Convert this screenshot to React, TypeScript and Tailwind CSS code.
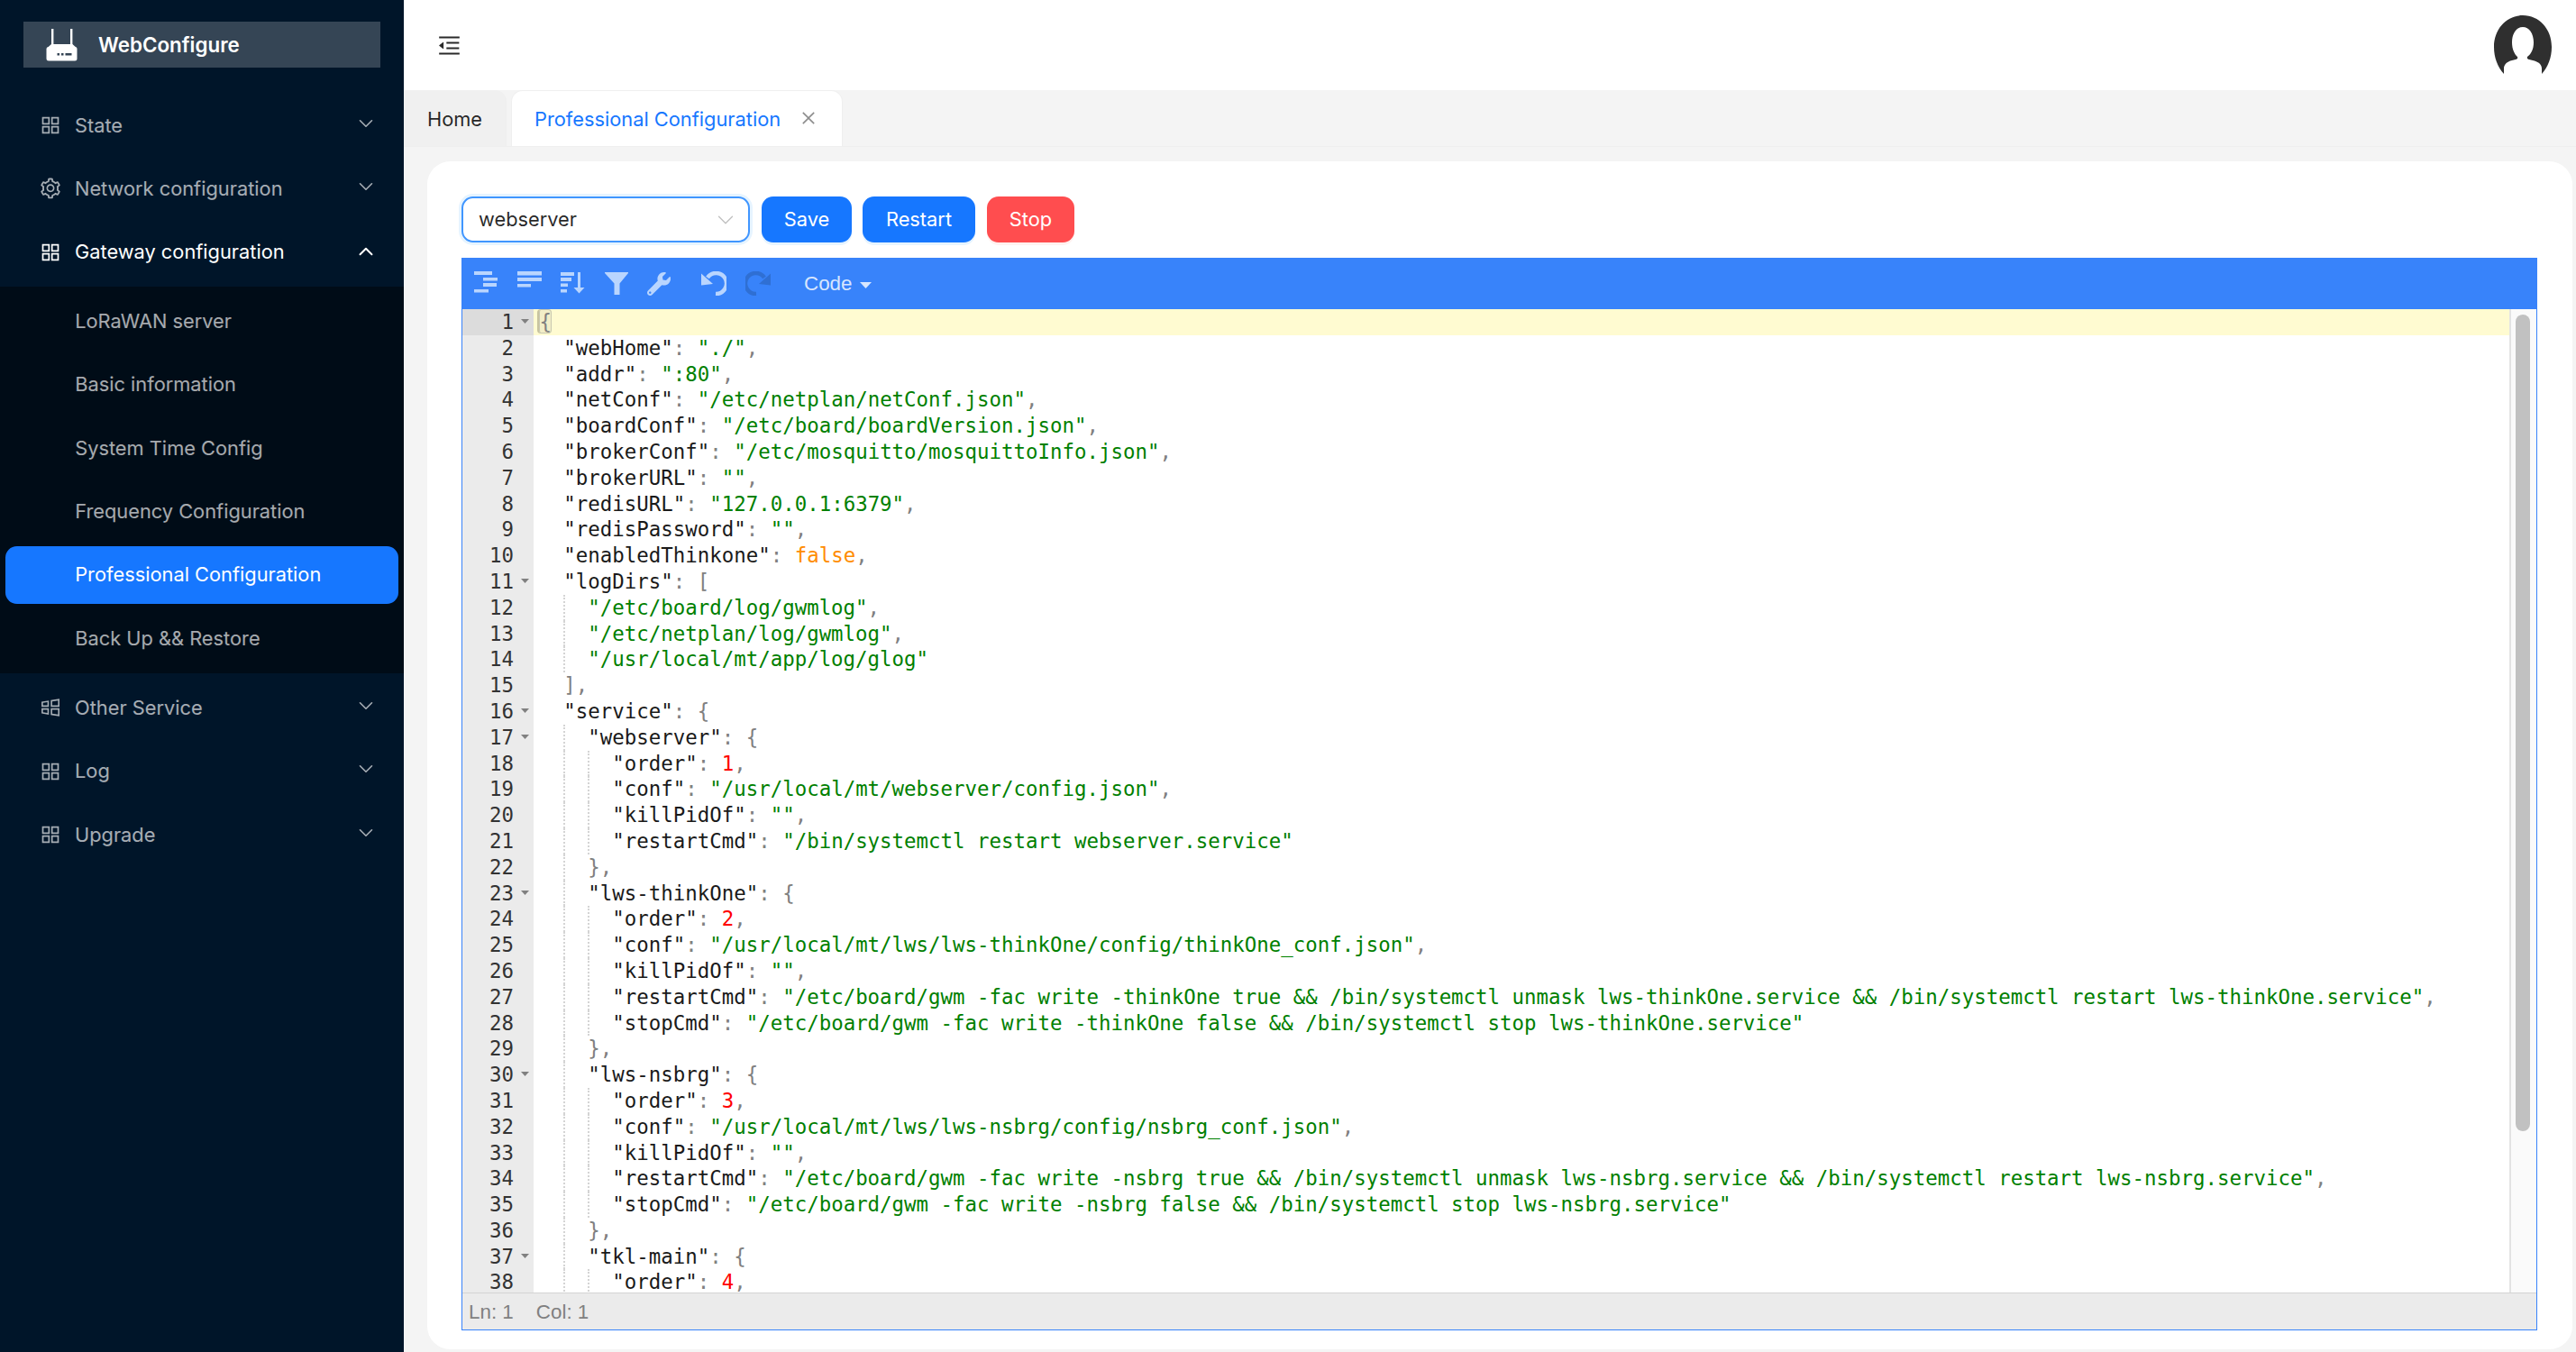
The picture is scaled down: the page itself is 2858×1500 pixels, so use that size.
import React from 'react';
import {
  AiOutlineAppstore,
  AiOutlineClose,
  AiOutlineMenuFold,
  AiOutlineSetting,
  AiOutlineWindows,
} from 'react-icons/ai';
import { FaWrench } from 'react-icons/fa';
import { ChevronDown, ChevronUp } from 'lucide-react';

const codeLines = [
  '{',
  '  "webHome": "./",',
  '  "addr": ":80",',
  '  "netConf": "/etc/netplan/netConf.json",',
  '  "boardConf": "/etc/board/boardVersion.json",',
  '  "brokerConf": "/etc/mosquitto/mosquittoInfo.json",',
  '  "brokerURL": "",',
  '  "redisURL": "127.0.0.1:6379",',
  '  "redisPassword": "",',
  '  "enabledThinkone": false,',
  '  "logDirs": [',
  '    "/etc/board/log/gwmlog",',
  '    "/etc/netplan/log/gwmlog",',
  '    "/usr/local/mt/app/log/glog"',
  '  ],',
  '  "service": {',
  '    "webserver": {',
  '      "order": 1,',
  '      "conf": "/usr/local/mt/webserver/config.json",',
  '      "killPidOf": "",',
  '      "restartCmd": "/bin/systemctl restart webserver.service"',
  '    },',
  '    "lws-thinkOne": {',
  '      "order": 2,',
  '      "conf": "/usr/local/mt/lws/lws-thinkOne/config/thinkOne_conf.json",',
  '      "killPidOf": "",',
  '      "restartCmd": "/etc/board/gwm -fac write -thinkOne true && /bin/systemctl unmask lws-thinkOne.service && /bin/systemctl restart lws-thinkOne.service",',
  '      "stopCmd": "/etc/board/gwm -fac write -thinkOne false && /bin/systemctl stop lws-thinkOne.service"',
  '    },',
  '    "lws-nsbrg": {',
  '      "order": 3,',
  '      "conf": "/usr/local/mt/lws/lws-nsbrg/config/nsbrg_conf.json",',
  '      "killPidOf": "",',
  '      "restartCmd": "/etc/board/gwm -fac write -nsbrg true && /bin/systemctl unmask lws-nsbrg.service && /bin/systemctl restart lws-nsbrg.service",',
  '      "stopCmd": "/etc/board/gwm -fac write -nsbrg false && /bin/systemctl stop lws-nsbrg.service"',
  '    },',
  '    "tkl-main": {',
  '      "order": 4,',
];

const foldLines = [1, 11, 16, 17, 23, 30, 37];

const tokenRe = /("(?:[^"\\]|\\.)*")(\s*:)?|(\b\d+\b)|(true|false)|([{}[\],])/g;

const highlight = (text: string) => {
  const out: React.ReactNode[] = [];
  let last = 0;
  let m: RegExpExecArray | null;
  tokenRe.lastIndex = 0;
  while ((m = tokenRe.exec(text))) {
    if (m.index > last) out.push(text.slice(last, m.index));
    if (m[1] && m[2]) {
      out.push(
        <span key={m.index}>
          <span className="text-[#1a1a1a]">{m[1]}</span>
          <span className="text-[#808080]">{m[2]}</span>
        </span>,
      );
    } else if (m[1]) {
      out.push(<span key={m.index} className="text-[#008000]">{m[1]}</span>);
    } else if (m[3]) {
      out.push(<span key={m.index} className="text-[#ff0000]">{m[3]}</span>);
    } else if (m[4]) {
      out.push(<span key={m.index} className="text-[#ff8c00]">{m[4]}</span>);
    } else {
      out.push(<span key={m.index} className="text-[#808080]">{m[5]}</span>);
    }
    last = m.index + m[0].length;
  }
  if (last < text.length) out.push(text.slice(last));
  return out;
};

const CodeLine = ({ text, active }: { text: string; active: boolean }) => {
  const indent = text.length - text.trimStart().length;
  const guides = Math.max(0, indent / 2 - 1);
  const body = text.trimStart();
  return (
    <div className={`flex h-[28.8px] pl-[6px] whitespace-pre ${active ? 'bg-[#fffbd1]' : ''}`}>
      {indent > 0 && <span className="w-[2ch] shrink-0" />}
      {Array.from({ length: guides }).map((_, i) => (
        <span key={i} className="w-[2ch] shrink-0 border-l-2 border-dotted border-[#d4d4d4]" />
      ))}
      {active ? (
        <span className="-ml-[2px] h-[27px] rounded-sm border-l-2 border-[#c8c4a0] bg-[#f2eec8] text-[#808080] shadow-[inset_0_0_0_1px_#c8c8b0]">{body}</span>
      ) : (
        <span>{highlight(body)}</span>
      )}
    </div>
  );
};

const RouterLogo = () => (
  <svg width="36" height="36" viewBox="0 0 36 36" className="shrink-0 text-white" fill="currentColor">
    <rect x="6" y="0" width="2.4" height="19" />
    <rect x="27" y="0" width="2.4" height="19" />
    <path d="M6 17h23.4l5 4.5H1z" />
    <rect x="0.5" y="20" width="34" height="15.5" rx="2.5" />
    <rect x="12.5" y="27" width="2.5" height="2.5" fill="#354555" />
    <rect x="17" y="27" width="2.5" height="2.5" fill="#354555" />
    <rect x="21.5" y="27" width="7" height="2.5" fill="#354555" />
  </svg>
);

const Avatar = () => (
  <svg width="64" height="66" viewBox="0 0 64 66">
    <path
      d="M11 65C4 57 0 47 0 35 0 15 14 0 32 0s32 15 32 35c0 12-4 22-11 30v-6c0-4-3-7-8-8.500l-6-1.500c-2-.6-3-2-1.500-3.500C41 43 44 38 44 30c0-10-5-17-12-17S20 20 20 30c0 8 3 13 5.500 15.500C27 47 26 48.400 24 49l-6 1.500c-4 1.500-7 4.500-7 8.500z"
      fill="#2f2f2f"
    />
  </svg>
);

type MenuItemProps = {
  label: string;
  icon?: React.ReactNode;
  open?: boolean;
};

const TopItem = ({ label, icon, open }: MenuItemProps) => (
  <div className={`mx-[6.4px] flex h-16 items-center pl-[37px] pr-[23px] ${open ? 'text-white' : 'text-white/65'}`}>
    <span className="mr-[13.6px] text-[26px]">{icon}</span>
    <span className="flex-1">{label}</span>
    {open ? (
      <ChevronUp className="-mt-[2px] h-[26px] w-[26px]" strokeWidth={1.8} />
    ) : (
      <ChevronDown className="-mt-[5px] h-[26px] w-[26px]" strokeWidth={1.5} />
    )}
  </div>
);

const subItems = [
  'LoRaWAN server',
  'Basic information',
  'System Time Config',
  'Frequency Configuration',
  'Professional Configuration',
  'Back Up && Restore',
];

const Sidebar = () => (
  <aside className="flex w-[448px] shrink-0 flex-col bg-[#001529]">
    <div className="mx-[26px] mt-6 flex h-[51px] items-center bg-[#354555] pl-[25px]">
      <RouterLogo />
      <span className="ml-[22px] text-[22.4px] font-semibold text-white">WebConfigure</span>
    </div>
    <nav className="mt-8 flex flex-col">
      <div className="flex flex-col gap-[6.4px]">
        <TopItem label="State" icon={<AiOutlineAppstore />} />
        <TopItem label="Network configuration" icon={<AiOutlineSetting />} />
        <TopItem label="Gateway configuration" icon={<AiOutlineAppstore />} open />
      </div>
      <div className="mt-[6px] flex flex-col gap-[6.4px] bg-[#000c17] py-[6.4px]">
        {subItems.map((s) => (
          <div
            key={s}
            className={`mx-[6.4px] flex h-16 items-center rounded-[12.8px] pl-[76.8px] ${
              s === 'Professional Configuration' ? 'bg-[#1677ff] text-white' : 'text-white/65'
            }`}
          >
            {s}
          </div>
        ))}
      </div>
      <div className="mt-[6.500px] flex flex-col gap-[6.500px]">
        <TopItem label="Other Service" icon={<AiOutlineWindows />} />
        <TopItem label="Log" icon={<AiOutlineAppstore />} />
        <TopItem label="Upgrade" icon={<AiOutlineAppstore />} />
      </div>
    </nav>
  </aside>
);

const ToolIcons = () => (
  <svg width="132" height="30" viewBox="0 0 132 30" fill="#b9d5fe" className="shrink-0">
    {/* format */}
    <rect x="0" y="1" width="20" height="4" />
    <rect x="10" y="8" width="16" height="3.500" />
    <rect x="10" y="14" width="15" height="4" />
    <rect x="0" y="21" width="16" height="3.500" />
    {/* compact */}
    <rect x="48" y="1" width="27" height="4.500" />
    <rect x="48" y="8" width="27" height="4" />
    <rect x="48" y="15" width="15" height="3.500" />
    {/* sort */}
    <rect x="96" y="2" width="15" height="4" />
    <rect x="96" y="8" width="12" height="4" />
    <rect x="96" y="14.500" width="8" height="3.500" />
    <rect x="96" y="21" width="7" height="3.500" />
    <path d="M115 2h3v17h4.500l-6 6.500-6-6.500H115z" />
  </svg>
);

const UndoIcon = ({ color, flip }: { color: string; flip?: boolean }) => (
  <svg width="28" height="27" viewBox="0 0 28 27" className={`shrink-0 ${flip ? '-scale-x-100' : ''}`}>
    <path d="M7 7A11.500 11.500 0 1 1 16 25" fill="none" stroke={color} strokeWidth="4.500" />
    <path d="M0 2.500V15.500L13 14z" fill={color} />
  </svg>
);

const Toolbar = () => (
  <div className="flex h-[57px] shrink-0 items-center bg-[#3883fa] pl-[14px] text-[#d7e6fe]">
    <ToolIcons />
    <svg width="27" height="26" viewBox="0 0 27 26" fill="#b9d5fe" className="ml-[13px] mt-[1px] shrink-0">
      <path d="M0 0h26v1L16.500 12.500V25h-6V12.500L0 1z" />
    </svg>
    <FaWrench className="ml-[20px] h-[26px] w-[26px] shrink-0 text-[#b9d5fe]" />
    <span className="ml-[34px] flex">
      <UndoIcon color="#b9d5fe" />
    </span>
    <span className="ml-[21px] flex">
      <UndoIcon color="#2f6fd3" flip />
    </span>
    <span className="ml-[37px] text-[22.4px] [font-family:'Liberation_Sans',sans-serif]">Code</span>
    <svg width="13" height="7" viewBox="0 0 13 7" fill="currentColor" className="ml-[8px] mt-[3px]">
      <path d="M0 0h13L6.500 7z" />
    </svg>
  </div>
);

const CodeEditor = () => (
  <div className="flex flex-1 flex-col overflow-hidden border-[1.6px] border-t-0 border-[#3883fa]">
    <div className="flex min-h-0 flex-1 overflow-hidden text-[22.42px] leading-[28.8px] text-[#1a1a1a] [font-family:'DejaVu_Sans_Mono',monospace]">
      <div className="w-[79.4px] shrink-0 bg-[#ebebeb] text-[#333]">
        {codeLines.map((_, i) => (
          <div
            key={i}
            className={`relative h-[28.8px] pr-[22.5px] text-right ${i === 0 ? 'bg-[#dcdcdc]' : ''}`}
          >
            {i + 1}
            {foldLines.includes(i + 1) && (
              <svg width="9" height="5" viewBox="0 0 9 5" fill="#808080" className="absolute right-[5px] top-[11px]">
                <path d="M0 0h9L4.500 5z" />
              </svg>
            )}
          </div>
        ))}
      </div>
      <div className="min-w-0 flex-1 overflow-hidden">
        {codeLines.map((l, i) => (
          <CodeLine key={i} text={l} active={i === 0} />
        ))}
      </div>
      <div className="w-[30px] shrink-0 border-l-2 border-[#e3e3e3] bg-[#fafafa] pl-[5px] pt-[6px]">
        <div className="h-[906px] w-4 rounded-lg bg-[#c1c1c1]" />
      </div>
    </div>
    <div className="flex h-[41px] shrink-0 items-center gap-[25px] border-t-[1.6px] border-[#d3d3d3] bg-[#ebebeb] pl-[7px] pt-[2px] text-[22.4px] text-[#808080] [font-family:'Liberation_Sans',sans-serif]">
      <span>Ln: 1</span>
      <span>Col: 1</span>
    </div>
  </div>
);

const App = () => {
  return (
    <div className="flex h-[1500px] w-[2858px] overflow-hidden bg-[#f4f4f4] text-[21.8px] [font-family:Inter,sans-serif]">
      <Sidebar />
      <main className="flex min-w-0 flex-1 flex-col">
        <header className="flex h-[100px] shrink-0 items-center justify-between bg-white pl-[36px] pr-[27px]">
          <AiOutlineMenuFold className="h-[29px] w-[29px] text-[#2a2a2a]" />
          <div className="mt-[-1px]">
            <Avatar />
          </div>
        </header>
        <div className="flex h-[63px] shrink-0 items-stretch border-b border-[#efefef]">
          <div className="flex w-[114px] items-center rounded-tr-[12.8px] border-r border-[#efefef] bg-[#f0f0f0] pl-[26px] pt-[2px] text-black/85">
            Home
          </div>
          <div className="ml-[5px] flex w-[368px] items-center rounded-t-[12.8px] border-x border-t border-[#efefef] bg-white pl-[25px] pt-[2px] text-[#1677ff]">
            Professional Configuration
            <AiOutlineClose className="-mt-[3px] ml-[21px] h-[20px] w-[20px] text-black/45" />
          </div>
        </div>
        <div className="flex min-h-0 flex-1 pb-[3px] pl-[26px] pr-[4px] pt-[16px]">
          <section className="flex min-w-0 flex-1 flex-col rounded-[25.6px] bg-white pb-[21px] pl-[38px] pr-[39px] pt-[39px]">
            <div className="flex h-[51px] shrink-0 items-stretch">
              <div className="flex w-[320px] items-center justify-between rounded-[12.8px] border-2 border-[#4096ff] bg-white pl-[17px] pr-[10.5px] text-black/85 shadow-[0_0_0_3px_rgba(5,145,255,0.1)]">
                webserver
                <ChevronDown className="h-[30px] w-[30px] text-[#bfbfbf]" strokeWidth={1.05} />
              </div>
              <button className="ml-[13px] w-[100px] rounded-[12.8px] bg-[#1677ff] text-white shadow-[0_3px_0_rgba(5,145,255,0.1)]">Save</button>
              <button className="ml-[12px] w-[125px] rounded-[12.8px] bg-[#1677ff] text-white shadow-[0_3px_0_rgba(5,145,255,0.1)]">Restart</button>
              <button className="ml-[13px] w-[97px] rounded-[12.8px] bg-[#ff4d4f] text-white shadow-[0_3px_0_rgba(255,38,5,0.06)]">Stop</button>
            </div>
            <div className="mt-[17px] flex min-h-0 flex-1 flex-col">
              <Toolbar />
              <CodeEditor />
            </div>
          </section>
        </div>
      </main>
    </div>
  );
};

export default App;
